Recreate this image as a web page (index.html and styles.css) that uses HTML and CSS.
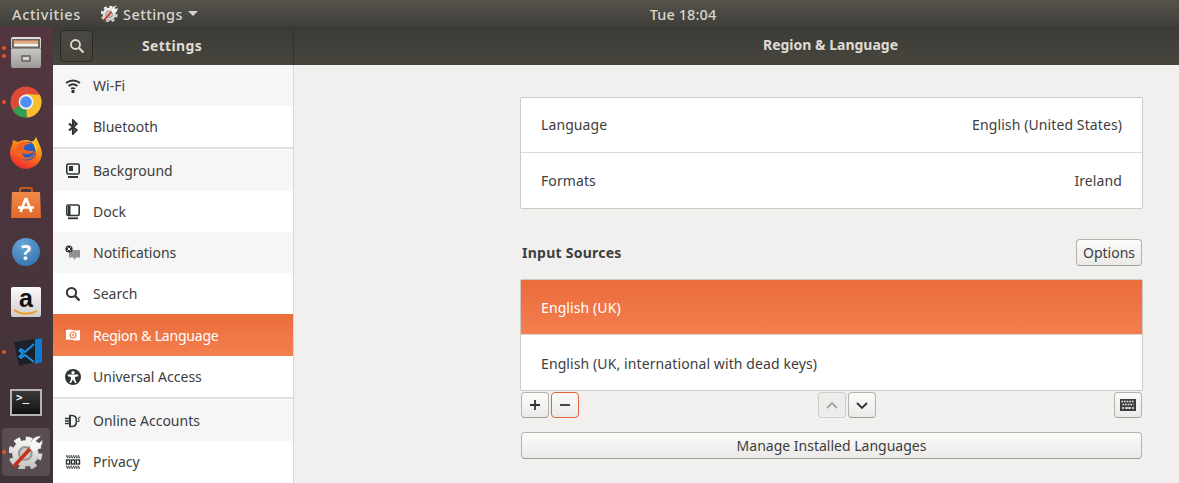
FILE: index.html
```html
<!DOCTYPE html>
<html lang="en">
<head>
<meta charset="utf-8">
<title>Region &amp; Language</title>
<link rel="stylesheet" href="styles.css">
</head>
<body>
<div class="screen">
  <header class="topbar">
    <div class="topbar-left">
      <span class="activities">Activities</span>
      <span class="appmenu">
        <svg class="appicon" width="17" height="17" viewBox="0 0 48 48"><use href="#gear"/></svg>
        <span>Settings</span>
        <span class="caret"></span>
      </span>
    </div>
    <span class="clock">Tue 18:04</span>
  </header>
  <div class="desktop">
    <nav class="dock">
      <div class="dock-item">
        <span class="pips"><i></i><i></i></span>
        <svg width="30" height="31" viewBox="0 0 30 31">
          <defs><linearGradient id="cab" x1="0" y1="0" x2="0" y2="1"><stop offset="0" stop-color="#e4e2de"/><stop offset="1" stop-color="#9c9a96"/></linearGradient></defs>
          <rect x="0" y="0" width="30" height="31" rx="2" fill="url(#cab)"/>
          <rect x="1" y="2" width="28" height="9" fill="#6b6761"/>
          <rect x="3" y="3.5" width="24" height="3" fill="#e9a878"/>
          <rect x="3" y="6.5" width="24" height="3" fill="#f3f1ec"/>
          <rect x="0" y="11" width="30" height="1" fill="#8e8c88"/>
          <rect x="10" y="18" width="10" height="7" rx="1" fill="#77746f"/>
          <rect x="12" y="20" width="6" height="3" fill="#d7d5d1"/>
        </svg>
      </div>
      <div class="dock-item">
        <span class="pips"><i></i></span>
        <svg width="32" height="32" viewBox="0 0 32 32">
          <circle cx="16" cy="16" r="15.5" fill="#dd4b39"/>
          <path d="M16 16 L2.6 24 A15.5 15.5 0 0 0 17 31.5 Z" fill="#2f9e50"/>
          <path d="M16 8 L29.8 8.8 A15.5 15.5 0 0 1 17 31.5 L16 16 Z" fill="#f5c02c"/>
          <circle cx="16" cy="16" r="7.4" fill="#f4f4f4"/>
          <circle cx="16" cy="16" r="5.8" fill="#4e8ff0"/>
        </svg>
      </div>
      <div class="dock-item">
        <svg width="32" height="33" viewBox="0 0 32 33">
          <defs><linearGradient id="fox" x1="0.8" y1="0" x2="0.3" y2="1"><stop offset="0" stop-color="#ffd21f"/><stop offset="0.5" stop-color="#fb7a1c"/><stop offset="1" stop-color="#f0252f"/></linearGradient></defs>
          <path d="M26 0 C26 3 31 9 32 17 A16 16 0 1 1 2 9 L3 4 L8 6 C12 4 18 3 22 6 C24 4 26 3 26 0Z" fill="url(#fox)"/>
          <circle cx="17" cy="15" r="9.5" fill="#2a5cc4"/>
          <path d="M8 8 C11 5 18 5 21 8 C17 8 13 9 14 13 C17 16 22 14 25 16 C25 21 19 25 12 23 C5 20 4 12 8 8Z" fill="#f4641f"/>
          <path d="M12 17 C16 19 21 18 24 16 C24 20 19 23 14 21Z" fill="#2a5cc4"/>
          <path d="M22 5 C27 7 28 13 26 19 C26 13 24 9 22 5Z" fill="#ffd21f"/>
        </svg>
      </div>
      <div class="dock-item">
        <svg width="30" height="31" viewBox="0 0 30 31">
          <defs><linearGradient id="bag" x1="0" y1="0" x2="0" y2="1"><stop offset="0" stop-color="#f08a48"/><stop offset="1" stop-color="#e2682a"/></linearGradient></defs>
          <path d="M9 7 V3 Q9 1 11 1 H19 Q21 1 21 3 V7" fill="none" stroke="#c9581f" stroke-width="2"/>
          <path d="M1 5 H29 L30 31 H0 Z" fill="url(#bag)"/>
          <path d="M15 11 L20.5 25 M15 11 L9.5 25 M7 20.5 H23" stroke="#fff" stroke-width="2.6" fill="none"/>
        </svg>
      </div>
      <div class="dock-item">
        <span class="help">?</span>
      </div>
      <div class="dock-item">
        <span class="amazon">a<svg width="26" height="7" viewBox="0 0 26 7"><path d="M1 1 Q12 8 24 2" fill="none" stroke="#f29a1f" stroke-width="1.8"/></svg></span>
      </div>
      <div class="dock-item">
        <span class="pips"><i></i></span>
        <svg class="vscode" width="28" height="28" viewBox="0 0 28 28">
          <path d="M0 4 L27 0 V23 L5 28 Z" fill="#1c2029"/>
          <path d="M21 1 L28 0 V24 L21 26 Z" fill="#0f7bd0"/>
          <path d="M20 6 L11 14 L7 11 L5.5 12.5 L9 15.5 L5.5 18.5 L7 20 L11 17 L20 24" fill="none" stroke="#1b8fe6" stroke-width="2"/>
        </svg>
      </div>
      <div class="dock-item">
        <span class="term">&gt;_</span>
      </div>
      <div class="dock-item dock-active">
        <span class="pips"><i></i></span>
        <svg width="34" height="34" viewBox="0 0 48 48">
          <defs>
            <linearGradient id="gearfill" x1="0" y1="0" x2="0" y2="1"><stop offset="0" stop-color="#f6f6f4"/><stop offset="1" stop-color="#c8c6c2"/></linearGradient>
            <g id="gear">
              <circle cx="23" cy="26" r="21" fill="none" stroke="url(#gearfill)" stroke-width="6" stroke-dasharray="9 7.5"/>
              <circle cx="23" cy="26" r="18.5" fill="url(#gearfill)"/>
              <circle cx="23" cy="26" r="10.5" fill="#9a9793"/>
              <circle cx="23" cy="26" r="7.5" fill="#c9c7c3"/>
              <path d="M8 43 L32 17" stroke="#c8301f" stroke-width="5" stroke-linecap="round"/>
              <path d="M29 19 L32 8 Q37 1 45 2 L38 8 L41 13 L47 7 Q48 16 40 20 L34 23 Z" fill="#f6f6f4"/>
            </g>
          </defs>
          <use href="#gear"/>
        </svg>
      </div>
    </nav>
    <div class="window">
      <div class="titlebar">
        <div class="titlebar-side">
          <button class="search-btn" type="button" aria-label="Search">
            <svg width="16" height="16" viewBox="0 0 16 16"><circle cx="6.5" cy="6.5" r="4.5" fill="none" stroke="#dfdbd2" stroke-width="1.8"/><path d="M10 10 L14.5 14.5" stroke="#dfdbd2" stroke-width="2.2"/></svg>
          </button>
          <span class="side-title">Settings</span>
        </div>
        <div class="main-title">Region &amp; Language</div>
      </div>
      <div class="panes">
        <aside class="sidebar">
          <div class="row alt">
            <svg class="ico" width="16" height="16" viewBox="0 0 16 16"><g fill="none" stroke="#2e3436" stroke-width="1.8"><path d="M1 5 Q8 0 15 5"/><path d="M3.5 8 Q8 4.5 12.5 8"/><path d="M6 10.8 Q8 9.4 10 10.8"/></g><circle cx="8" cy="13.5" r="1.7" fill="#2e3436"/></svg>
            <span>Wi-Fi</span>
          </div>
          <div class="row">
            <svg class="ico" width="16" height="16" viewBox="0 0 16 16"><path d="M4 4.5 L11.5 11 L8 14.5 V1.5 L11.5 5 L4 11.5" fill="none" stroke="#2e3436" stroke-width="2.2"/></svg>
            <span>Bluetooth</span>
          </div>
          <div class="sep"></div>
          <div class="row alt">
            <svg class="ico" width="16" height="16" viewBox="0 0 16 16"><rect x="1.8" y="1" width="12.4" height="10" rx="1.5" fill="none" stroke="#2e3436" stroke-width="1.6"/><rect x="4" y="3" width="4" height="5" fill="#2e3436"/><rect x="3" y="13" width="10" height="2" fill="#2e3436"/></svg>
            <span>Background</span>
          </div>
          <div class="row">
            <svg class="ico" width="16" height="16" viewBox="0 0 16 16"><rect x="1.8" y="1" width="12.4" height="10.5" rx="1.5" fill="none" stroke="#2e3436" stroke-width="1.6"/><rect x="3" y="2" width="2.5" height="9" fill="#2e3436"/><rect x="3" y="13.4" width="10" height="1.8" fill="#2e3436"/></svg>
            <span>Dock</span>
          </div>
          <div class="row alt">
            <svg class="ico" width="16" height="16" viewBox="0 0 16 16"><path d="M4 5 H15 V12.5 H11 L9.5 15 L8.5 12.5 H4 Z" fill="#8f9190"/><circle cx="4" cy="4" r="3.6" fill="#2e3436"/><path d="M2.4 2.4 L5.6 5.6 M5.6 2.4 L2.4 5.6" stroke="#fff" stroke-width="1"/></svg>
            <span>Notifications</span>
          </div>
          <div class="row">
            <svg class="ico" width="16" height="16" viewBox="0 0 16 16"><circle cx="6.5" cy="6.5" r="4.6" fill="none" stroke="#2e3436" stroke-width="2"/><path d="M10 10 L14.5 14.5" stroke="#2e3436" stroke-width="2.4"/></svg>
            <span>Search</span>
          </div>
          <div class="row selected">
            <svg class="ico" width="16" height="16" viewBox="0 0 16 16"><path d="M1 3 Q5 2 8 3 Q11 4 15 3 V13 Q11 14 8 13 Q5 12 1 13 Z" fill="#fff"/><circle cx="8" cy="8" r="3" fill="none" stroke="#ee7a46" stroke-width="1.2"/><circle cx="8" cy="8" r="1" fill="#ee7a46"/></svg>
            <span>Region &amp; Language</span>
          </div>
          <div class="row">
            <svg class="ico" width="16" height="16" viewBox="0 0 16 16"><circle cx="8" cy="8" r="8" fill="#2e3436"/><circle cx="8" cy="3.6" r="1.7" fill="#fff"/><path d="M2.8 5.6 H13.2 V7.2 L10 8 V10 L11.6 14 H10 L8 10.6 L6 14 H4.4 L6 10 V8 L2.8 7.2 Z" fill="#fff"/></svg>
            <span>Universal Access</span>
          </div>
          <div class="sep"></div>
          <div class="row alt">
            <svg class="ico" width="16" height="16" viewBox="0 0 16 16"><path d="M5 2.5 H7 Q11.5 2.5 11.5 8 Q11.5 13.5 7 13.5 H5 Z" fill="none" stroke="#2e3436" stroke-width="1.6"/><path d="M5 2 V14 M0 5.5 H5 M0 8 H5 M0 10.5 H5" stroke="#2e3436" stroke-width="1.4"/><path d="M15.5 4 Q13 4 13.5 6 Q14.5 7 14 8.5 H12.5" fill="none" stroke="#2e3436" stroke-width="1"/></svg>
            <span>Online Accounts</span>
          </div>
          <div class="row">
            <svg class="ico" width="16" height="16" viewBox="0 0 16 16"><path d="M1 2 H15 M2 3.5 H15 M1 12.5 H15 M2 14 H15" stroke="#2e3436" stroke-width="1.3" stroke-dasharray="1.3 1"/><g fill="none" stroke="#2e3436" stroke-width="1.4"><rect x="1.5" y="6" width="3.2" height="4"/><rect x="6.4" y="6" width="3.2" height="4"/><rect x="11.3" y="6" width="3.2" height="4"/></g></svg>
            <span>Privacy</span>
          </div>
        </aside>
        <main class="content">
          <section class="frame regional">
            <div class="frow first"><span>Language</span><span>English (United States)</span></div>
            <div class="frow"><span>Formats</span><span>Ireland</span></div>
          </section>
          <div class="input-head">
            <h2>Input Sources</h2>
            <button class="btn options" type="button">Options</button>
          </div>
          <section class="frame sources">
            <div class="frow first active"><span>English (UK)</span></div>
            <div class="frow"><span>English (UK, international with dead keys)</span></div>
          </section>
          <div class="toolbar">
            <div class="tgroup">
              <button class="btn tool" type="button" aria-label="Add"><svg width="12" height="12" viewBox="0 0 12 12"><path d="M6 1 V11 M1 6 H11" stroke="#2e3436" stroke-width="1.8"/></svg></button>
              <button class="btn tool focus" type="button" aria-label="Remove"><svg width="12" height="12" viewBox="0 0 12 12"><path d="M1 6 H11" stroke="#2e3436" stroke-width="1.8"/></svg></button>
            </div>
            <div class="tgroup">
              <button class="btn tool disabled" type="button" aria-label="Up"><svg width="14" height="14" viewBox="0 0 14 14"><path d="M2 10 L7 5 L12 10" fill="none" stroke="#a5a5a2" stroke-width="1.8"/></svg></button>
              <button class="btn tool" type="button" aria-label="Down"><svg width="14" height="14" viewBox="0 0 14 14"><path d="M2 5 L7 10 L12 5" fill="none" stroke="#2e3436" stroke-width="1.8"/></svg></button>
            </div>
            <button class="btn tool" type="button" aria-label="Keyboard">
              <svg width="16" height="12" viewBox="0 0 16 12"><rect width="16" height="12" fill="#3d3d3d"/><path d="M1.5 2.5 H14.5 M2.5 5.5 H13.5" stroke="#f0efed" stroke-width="1.4" stroke-dasharray="1.6 1"/><path d="M2 9 H4 M5 9 H11 M12 9 H14" stroke="#f0efed" stroke-width="1.4"/></svg>
            </button>
          </div>
          <button class="btn manage" type="button">Manage Installed Languages</button>
        </main>
      </div>
    </div>
  </div>
</div>
</body>
</html>
```

FILE: styles.css
```css
* { box-sizing: border-box; }
html, body { margin: 0; padding: 0; }
body {
  width: 1179px;
  height: 483px;
  overflow: hidden;
  font-family: "Noto Sans", "Open Sans", sans-serif;
  font-size: 14px;
  color: #3d3d3d;
  background: #f1f0ee;
}
.screen { display: flex; flex-direction: column; height: 483px; }

.topbar {
  position: relative;
  flex: 0 0 27px;
  display: flex;
  align-items: center;
  justify-content: center;
  background: linear-gradient(#57544d, #3e3d38);
  color: #d8d5cd;
  font-size: 14.5px;
  font-weight: 500;
  letter-spacing: 0.45px;
}
.topbar-left {
  position: absolute;
  left: 12px;
  top: 0;
  height: 27px;
  display: flex;
  align-items: center;
  gap: 20px;
}
.activities { letter-spacing: 0.65px; }
.appmenu { display: flex; align-items: center; gap: 5px; }
.caret {
  width: 0;
  height: 0;
  border-left: 5px solid transparent;
  border-right: 5px solid transparent;
  border-top: 5px solid #d8d5cd;
}
.clock { margin-left: 187px; letter-spacing: 0.1px; }

.desktop { flex: 1; display: flex; min-height: 0; }

.dock {
  flex: 0 0 53px;
  display: flex;
  flex-direction: column;
  padding-right: 1px;
  background: linear-gradient(#53363f, #3f3338);
}
.dock-item {
  position: relative;
  flex: 0 0 50px;
  display: flex;
  align-items: center;
  justify-content: center;
}
.dock-item svg { display: block; }
.dock-item .vscode { margin-left: 4px; }
.dock-active::before {
  content: "";
  position: absolute;
  left: 2px;
  top: 1px;
  width: 48px;
  height: 48px;
  border-radius: 4px;
  background: rgba(255, 255, 255, 0.13);
}
.dock-active svg { position: relative; }
.pips {
  position: absolute;
  left: 2px;
  top: 0;
  bottom: 0;
  display: flex;
  flex-direction: column;
  justify-content: center;
  gap: 4px;
}
.pips i {
  display: block;
  width: 4px;
  height: 4px;
  border-radius: 50%;
  background: #e95420;
}
.help {
  width: 28px;
  height: 28px;
  border-radius: 50%;
  background: radial-gradient(circle at 40% 25%, #6aa7d8, #2a6ba5);
  color: #fff;
  font-weight: 700;
  font-size: 21px;
  line-height: 28px;
  letter-spacing: 0;
  text-align: center;
}
.amazon {
  position: relative;
  width: 30px;
  height: 30px;
  border-radius: 2px;
  background: linear-gradient(#fbfbfa, #cfcecb);
  color: #111;
  font-family: "Liberation Sans", sans-serif;
  font-weight: 700;
  font-size: 25px;
  line-height: 23px;
  text-align: center;
}
.amazon svg { position: absolute; left: 2px; bottom: 1px; }
.term {
  width: 32px;
  height: 27px;
  background: linear-gradient(#3a3a3a, #111);
  border: 2px solid #b5b4b0;
  color: #f2f2f2;
  font-family: "DejaVu Sans Mono", monospace;
  font-weight: 700;
  font-size: 11px;
  line-height: 14px;
  padding-left: 4px;
}

.window { flex: 1; display: flex; flex-direction: column; min-width: 0; }
.titlebar {
  flex: 0 0 38px;
  display: flex;
  background: linear-gradient(#3b3a36, #48463f);
  color: #dfdbd2;
  font-weight: 700;
  font-size: 14px;
}
.titlebar-side {
  position: relative;
  flex: 0 0 241px;
  display: flex;
  align-items: center;
  justify-content: center;
  border-right: 1px solid #333230;
  padding-bottom: 2px;
}
.search-btn {
  position: absolute;
  left: 7px;
  top: 3px;
  width: 33px;
  height: 32px;
  padding: 0;
  display: flex;
  align-items: center;
  justify-content: center;
  background: linear-gradient(#4a4842, #45433c);
  border: 1px solid #2a2926;
  border-radius: 4px;
}
.side-title { letter-spacing: 0.35px; margin-right: 2px; }
.main-title {
  flex: 1;
  text-align: center;
  line-height: 36px;
  padding: 0 38px 0 226px;
}

.panes { flex: 1; display: flex; min-height: 0; }
.sidebar {
  flex: 0 0 241px;
  background: #fff;
  border-right: 1px solid #d9d8d5;
  display: flex;
  flex-direction: column;
}
.row {
  flex: 0 0 41px;
  display: flex;
  align-items: center;
  gap: 12px;
  padding-left: 12px;
  color: #3d3d3d;
}
.row.alt { background: #f6f6f6; }
.row.selected {
  flex-basis: 42px;
  background: linear-gradient(#ea6c3b, #f47f4f);
  color: #fff;
  letter-spacing: -0.2px;
}
.ico { flex: 0 0 16px; }
.sep {
  flex: 0 0 3px;
  background: #fff;
  border-top: 2px solid #dfdfdd;
}

.content {
  flex: 1;
  padding: 32px 36px 0 226px;
  display: flex;
  flex-direction: column;
  min-width: 0;
}
.frame {
  background: #fff;
  border: 1px solid #cdc9c5;
  border-radius: 2px;
}
.frow {
  height: 56px;
  padding: 0 20px;
  display: flex;
  align-items: center;
  justify-content: space-between;
  letter-spacing: 0.1px;
}
.frow.first { height: 54px; }
.frow + .frow { border-top: 1px solid #dcdad7; }
.regional .first { padding-bottom: 2px; }
.sources .frow + .frow { padding-top: 2px; }
.frow.active {
  background: linear-gradient(#ea6c3b, #f47f4f);
  color: #fff;
}
.input-head {
  display: flex;
  align-items: center;
  justify-content: space-between;
  margin: 30px 1px 13px 2px;
}
.input-head h2 {
  margin: 0;
  font-size: 14px;
  font-weight: 700;
  letter-spacing: 0.25px;
  color: #3d3d3d;
}
.btn {
  font: inherit;
  color: #3d3d3d;
  background: linear-gradient(#fbfbfa, #ebeae8);
  border: 1px solid #b6b3af;
  border-bottom-color: #a09d99;
  border-radius: 4px;
  padding: 0;
}
.options { width: 66px; height: 27px; }
.toolbar {
  display: flex;
  justify-content: space-between;
  align-items: center;
  margin: 1px 1px 14px 1px;
}
.tgroup { display: flex; gap: 2px; }
.tool {
  width: 28px;
  height: 26px;
  display: flex;
  align-items: center;
  justify-content: center;
}
.tool.focus { border-color: #e0643a; }
.tool.disabled { background: #eeedeb; border-color: #cfcdca; }
.manage { height: 27px; margin: 0 1px; }
```
